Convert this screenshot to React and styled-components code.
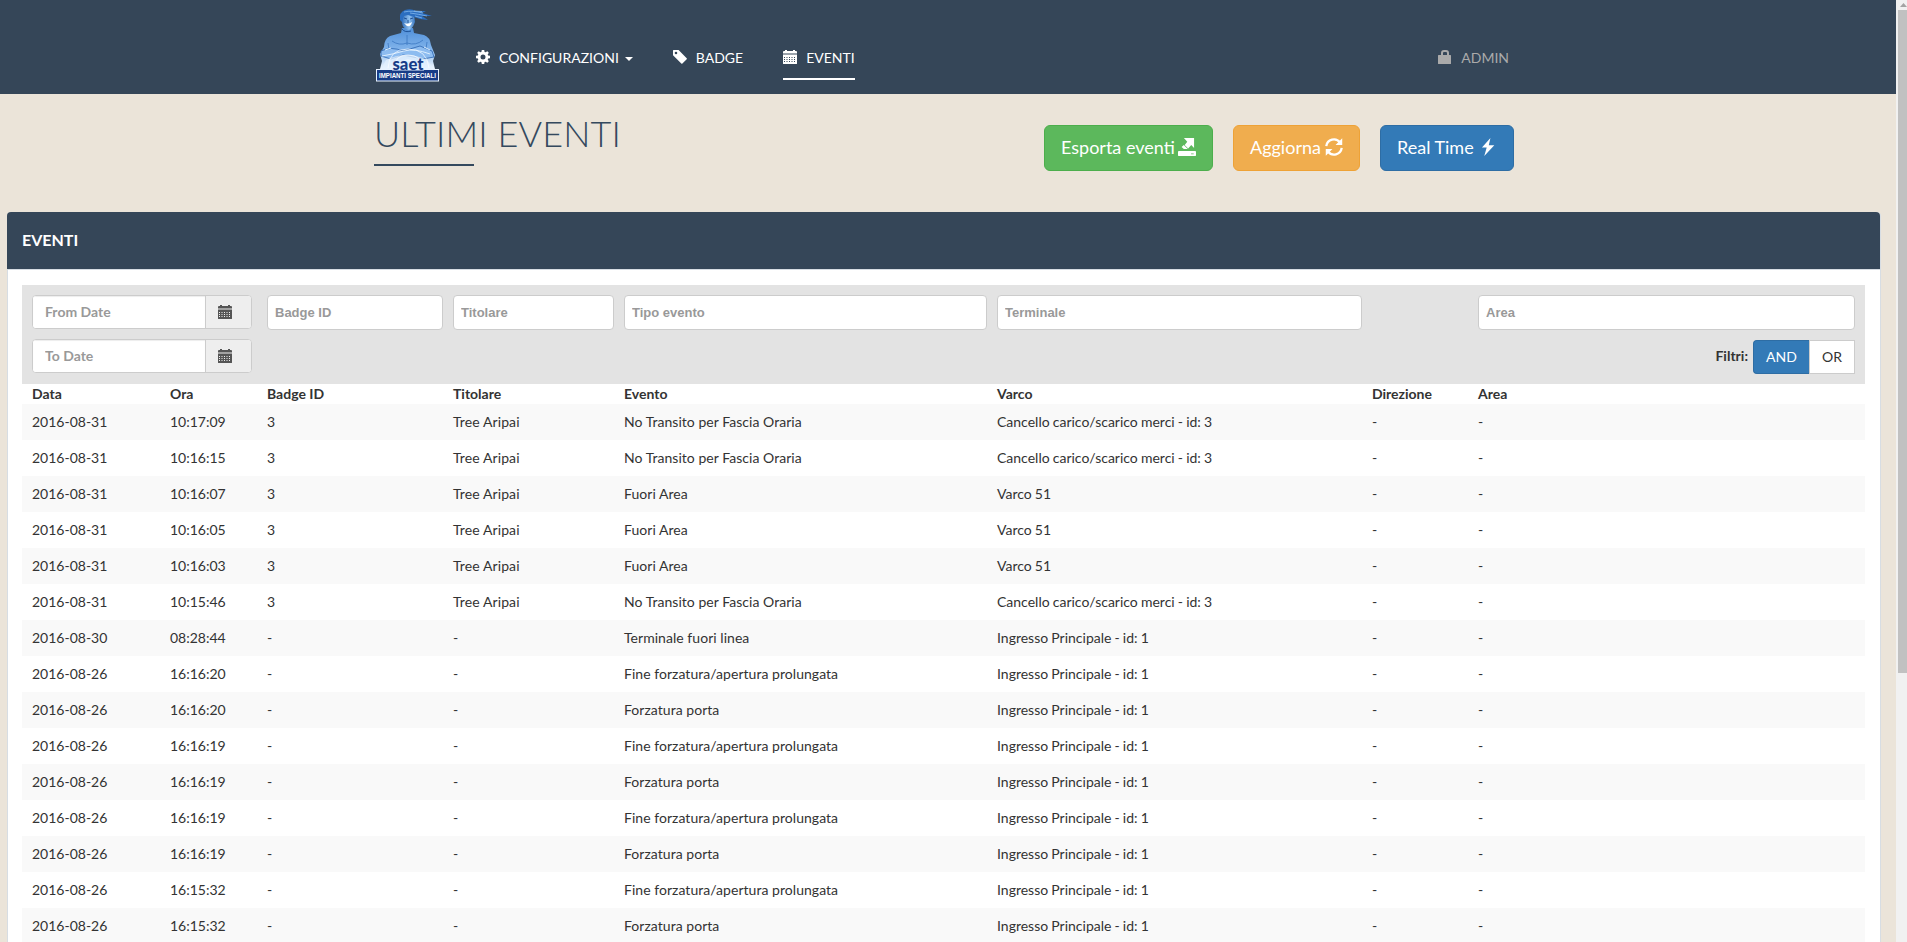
import React from 'react';
import styled, { createGlobalStyle } from 'styled-components';

const GlobalStyle = createGlobalStyle`
  *, *::before, *::after { box-sizing: border-box; }
  html, body { margin: 0; height: 100%; overflow: hidden; }
  body {
    background: #ebe4d9;
    font-family: Lato, "Liberation Sans", sans-serif;
    font-size: 14px;
    line-height: 20px;
    color: #333;
  }
  svg { display: block; flex: none; overflow: visible; }
`;

const Shell = styled.div`
  display: flex;
  height: 942px;
  overflow: hidden;
`;

const Page = styled.div`
  flex: 1;
  min-width: 0;
`;

const Scrollbar = styled.div`
  width: 11px;
  padding: 3px 0 0 2px;
  background: #f1f1f1;
`;

const ScrollArrow = styled.svg`
  margin-left: 2px;
`;

const ScrollThumb = styled.div`
  height: 663px;
  margin-top: 3px;
  background: #c1c1c1;
`;

const NavBar = styled.header`
  height: 94px;
  background: #354658;
`;

const Container = styled.div`
  display: flex;
  width: 1140px;
  margin-left: 374px;
`;

const LogoBox = styled.a`
  width: 66px;
  padding-top: 8px;
  margin-right: 36px;
`;

const NavList = styled.nav`
  display: flex;
  flex: 1;
  padding-top: 48px;
`;

const NavItem = styled.a`
  display: flex;
  align-items: flex-start;
  height: 32px;
  margin-right: ${(p) => p.$gap || 0}px;
  margin-left: ${(p) => (p.$end ? 'auto' : 0)};
  color: ${(p) => (p.$muted ? '#aaa' : '#fff')};
  border-bottom: 2px solid ${(p) => (p.$active ? '#fff' : 'transparent')};
  white-space: nowrap;
  svg { margin-top: 2px; }
  span { margin-left: 9px; }
`;

const Caret = styled.i`
  margin: 9px 0 0 6px;
  border: 4px solid transparent;
  border-top-color: #fff;
  border-bottom: 0;
`;

const TitleRow = styled(Container)`
  height: 118px;
  justify-content: space-between;
  align-items: flex-start;
`;

const Title = styled.h1`
  margin: 19px 0 0;
  color: #34495e;
  font-size: 36px;
  font-weight: 300;
  letter-spacing: 0.1px;
  line-height: 40px;
  &::after {
    content: "";
    display: block;
    width: 100px;
    height: 2px;
    margin-top: 11px;
    background: #34495e;
  }
`;

const Actions = styled.div`
  display: flex;
  gap: 20px;
  margin-top: 31px;
`;

const tones = {
  green: ['#5cb85c', '#4cae4c'],
  orange: ['#f0ad4e', '#eea236'],
  blue: ['#337ab7', '#2e6da4'],
};

const ActionButton = styled.button`
  display: flex;
  align-items: center;
  gap: ${(p) => p.$gap}px;
  width: ${(p) => p.$width}px;
  height: 46px;
  padding: 0 0 2px 16px;
  border: 1px solid ${(p) => tones[p.$tone][1]};
  border-radius: 6px;
  background: ${(p) => tones[p.$tone][0]};
  color: #fff;
  font: 18px/24px Lato, "Liberation Sans", sans-serif;
  white-space: nowrap;
`;

const Panel = styled.section`
  width: 1874px;
  height: 760px;
  margin-left: 7px;
  border: 1px solid #d7dde3;
  border-top: 0;
  border-radius: 4px 4px 0 0;
  background: #fff;
`;

const PanelHeading = styled.h2`
  height: 57px;
  margin: 0 0 0 -1px;
  padding: 18px 15px;
  border-radius: 4px 4px 0 0;
  background: #354658;
  color: #fff;
  font-size: 16px;
  font-weight: 700;
  line-height: 20px;
`;

const PanelBody = styled.div`
  padding: 15px 15px 15px 14px;
  border-top: 1px solid #d7dde3;
`;

const columns = '138px 97px 186px 171px 373px 375px 106px 397px';

const Filters = styled.div`
  display: grid;
  grid-template-columns: 235px 186px 171px 373px 375px 106px 397px;
  height: 99px;
  padding-top: 10px;
  background: #e3e3e3;
`;

const FilterCell = styled.div`
  display: flex;
  flex-direction: column;
  gap: 10px;
  padding-left: 10px;
  padding-right: ${(p) => p.$right || 0}px;
`;

const DateField = styled.div`
  display: flex;
  width: 220px;
  height: 34px;
  border: 1px solid #ccc;
  border-radius: 4px;
  background: #fff;
  overflow: hidden;
`;

const DateInput = styled.input`
  width: 172px;
  padding: 0 12px;
  border: 0;
  outline: 0;
  box-shadow: inset 0 1px 1px rgba(0, 0, 0, 0.075);
  font: 700 14px/20px Lato, "Liberation Sans", sans-serif;
  &::placeholder { color: #999; opacity: 1; }
`;

const DateAddon = styled.div`
  flex: 1;
  padding: 9px 0 0 12px;
  border-left: 1px solid #ccc;
  background: #eee;
  color: #555;
`;

const TextInput = styled.input`
  width: 100%;
  height: 35px;
  padding: 0 7px;
  border: 1px solid #ccc;
  border-radius: 4px;
  background: #fff;
  font: 700 13px/20px "Liberation Sans", Arial, sans-serif;
  &::placeholder { color: #999; opacity: 1; }
`;

const Toggle = styled.div`
  display: flex;
  justify-content: flex-end;
`;

const ToggleLabel = styled.b`
  margin: 6px 5px 0 0;
`;

const ToggleButton = styled.button`
  width: ${(p) => (p.$on ? 56 : 46)}px;
  height: 34px;
  padding: 0;
  border: 1px solid ${(p) => (p.$on ? '#2e6da4' : '#ccc')};
  border-right-width: ${(p) => (p.$on ? 0 : 1)}px;
  border-radius: ${(p) => (p.$on ? '4px 0 0 4px' : '0')};
  background: ${(p) => (p.$on ? '#337ab7' : '#fff')};
  color: ${(p) => (p.$on ? '#fff' : '#333')};
  font: 14px/20px Lato, "Liberation Sans", sans-serif;
`;

const HeaderRow = styled.div`
  display: grid;
  grid-template-columns: ${columns};
  height: 20px;
  font-weight: 700;
`;

const Cell = styled.span`
  padding-left: 10px;
  white-space: nowrap;
`;

const Row = styled.div`
  display: grid;
  grid-template-columns: ${columns};
  height: 36px;
  padding-top: 8px;
  &:nth-child(odd) { background: #f9f9f9; }
  ${Cell}:nth-child(4) { letter-spacing: 0.1px; }
  ${Cell}:nth-child(5) { letter-spacing: 0.04px; }
  ${Cell}:nth-child(6) { word-spacing: -0.45px; }
`;

const Icon = ({ size = 14, children }) => (
  <svg width={size} height={size} viewBox="0 0 14 14" fill="currentColor">{children}</svg>
);

const CogIcon = () => (
  <Icon>
    <path fillRule="evenodd" d="M5.800 0h2.400l.4 1.900 1 .4L11.300 1.200 12.800 2.700 11.700 4.400l.4 1L14 5.800v2.400l-1.900.4-.4 1 1.100 1.700-1.500 1.500-1.700-1.100-1 .4L8.200 14H5.800l-.4-1.900-1-.4-1.700 1.100-1.500-1.500L2.300 9.600l-.4-1L0 8.200V5.800l1.900-.4.4-1L1.200 2.700l1.500-1.500L4.400 2.300l1-.4zM7 4.500A2.500 2.500 0 1 0 7 9.500 2.500 2.500 0 1 0 7 4.500z" />
  </Icon>
);

const TagIcon = () => (
  <Icon>
    <path fillRule="evenodd" d="M.6 0H5.600L13.700 8.200a.8.800 0 0 1 0 1.100L9.400 13.600a.8.800 0 0 1-1.100 0L0 5.300V.6A.6.6 0 0 1 .6 0zM3 1.700a1.300 1.300 0 1 0 0 2.600 1.300 1.300 0 1 0 0-2.600z" />
  </Icon>
);

const CalendarIcon = () => (
  <Icon>
    <path d="M2 0h2v1h6V0h2v1h1a1 1 0 0 1 1 1v1H0V2a1 1 0 0 1 1-1h1z" />
    <path opacity=".5" d="M0 3h14v2H0z" />
    <path fillRule="evenodd" d="M0 5h14v8.400a.6.600 0 0 1-.6.600H.6a.6.600 0 0 1-.6-.6zM1 7v1h1V7zM3.500 7v1h1V7zM6 7v1h1V7zM8.500 7v1h1V7zM11 7v1h1V7zM1 9v1h1V9zM3.500 9v1h1V9zM6 9v1h1V9zM8.500 9v1h1V9zM11 9v1h1V9zM1 11v1h1v-1zM3.500 11v1h1v-1zM6 11v1h1v-1zM8.500 11v1h1v-1zM11 11v1h1v-1z" />
  </Icon>
);

const LockIcon = () => (
  <Icon>
    <path fillRule="evenodd" d="M3 5V3a3 3 0 0 1 3-3h2a3 3 0 0 1 3 3v2h1.400a.6.600 0 0 1 .6.600v7.800a.6.600 0 0 1-.6.600H.6a.6.600 0 0 1-.6-.6V5.600A.6.600 0 0 1 .6 5zM5 5h4V3a1 1 0 0 0-1-1H6a1 1 0 0 0-1 1z" />
  </Icon>
);

const ExportIcon = () => (
  <Icon size={18}>
    <path d="M4.600 0H12.500V7.800L10.300 5.500 7.900 8.100 5.200 5.400 7.200 2.900zM4.500 5.500 7.600 8.500H4.500L2.800 7z" />
    <path fillRule="evenodd" d="M.4 10.200H13.600l.4 .4V13.600l-.4.400H.4L0 13.600v-3zM10.200 12v.7h2V12z" />
  </Icon>
);

const RefreshIcon = () => (
  <Icon size={18}>
    <path fill="none" stroke="currentColor" strokeWidth="1.800" d="M1 6.300A6 6 0 0 1 11.700 3.500M13 7.700A6 6 0 0 1 2.300 10.500" />
    <path d="M13.400 .2V5.500H8.200zM.6 13.800V8.500H5.800z" />
  </Icon>
);

const FlashIcon = () => (
  <Icon size={18}>
    <path d="M8.900 0 2.300 7.400H6L4.100 14 11.900 5.700H7.600z" />
  </Icon>
);

const Logo = () => (
  <svg width="66" height="76" viewBox="0 0 66 76">
    <defs>
      <linearGradient id="skin" x1="0" y1="0" x2="0" y2="1">
        <stop offset="0" stopColor="#4f8fd9" />
        <stop offset=".5" stopColor="#7fb2ea" />
        <stop offset="1" stopColor="#f1f8ff" />
      </linearGradient>
      <linearGradient id="face" x1="0" y1="0" x2="1" y2="0">
        <stop offset="0" stopColor="#2a68b6" />
        <stop offset=".6" stopColor="#8fc0ef" />
        <stop offset="1" stopColor="#3976bf" />
      </linearGradient>
    </defs>
    <path fill="url(#skin)" d="M28 20 27 25 16 28Q10 31 10 39L6 46 8 53 6 61H61L59 53 61 47 57 37Q56 29 50 27L40 25 39 20z" />
    <path fill="url(#face)" d="M27 6Q31 1 40 5L41 14Q38 22 34 22 28 20 28 14z" />
    <path fill="#2b6ec0" d="M26 12Q25 4 31 2 37 0 42 3L52 3 48 5 58 8 48 8 54 12 46 11 40 9 34 7 30 8 28 14z" />
    <path fill="none" stroke="#8fc2f2" strokeWidth=".7" d="M30 4Q38 2 49 5M36 5Q44 6 53 8M40 3 48 3.500M41 8 48 10" />
    <path fill="none" stroke="#17498f" strokeWidth=".9" d="M30 10l3 1M36 11l3-1M34 12v3M28 21Q31 25 37 23" />
    <path fill="none" stroke="#3b77c2" strokeWidth=".8" d="M14 35 15 42M53 34 52 41M33 27V37M18 33Q25 38 33 35 42 38 49 32" />
    <path fill="#fff" d="M30 15Q34 17 38 14 37 19 33 18z" />
    <path fill="#8dbcf0" stroke="#2b65b0" strokeWidth=".8" d="M7 43Q17 38 29 43L46 38 58 43 60 49 49 51 29 47 17 51 7 48z" />
    <path fill="none" stroke="#dceeff" strokeWidth="1" d="M8 48Q20 46 30 43T56 46M11 42 17 40M50 39 56 42" />
    <path fill="#e4f1ff" opacity=".75" d="M12 52Q32 42 53 52L60 61H7z" />
    <path fill="none" stroke="#fff" opacity=".8" strokeWidth=".8" d="M21 60Q20 47 34 47T48 60M14 60Q15 41 34 41T55 60M27 60Q27 52 34 52T42 60" />
    <rect x="2.500" y="61.500" width="62" height="11.500" fill="#173c87" stroke="#e9f3ff" />
    <path stroke="#e9f3ff" strokeWidth="2" d="M18 61.500H50" />
    <text x="18.500" y="61.500" fill="#173c87" fontFamily="Lato, sans-serif" fontSize="17" fontWeight="900" textLength="31" lengthAdjust="spacingAndGlyphs">saet</text>
    <text x="5" y="70.300" fill="#fff" fontFamily="Liberation Sans, sans-serif" fontSize="7.500" fontWeight="700" textLength="57" lengthAdjust="spacingAndGlyphs">IMPIANTI SPECIALI</text>
  </svg>
);

const cancello = 'Cancello carico/scarico merci - id: 3';
const ingresso = 'Ingresso Principale - id: 1';
const fascia = 'No Transito per Fascia Oraria';
const fine = 'Fine forzatura/apertura prolungata';

const badgeEvent = (time, event, gate) => ['2016-08-31', time, '3', 'Tree Aripai', event, gate, '-', '-'];
const doorEvent = (date, time, event) => [date, time, '-', '-', event, ingresso, '-', '-'];

const events = [
  badgeEvent('10:17:09', fascia, cancello),
  badgeEvent('10:16:15', fascia, cancello),
  badgeEvent('10:16:07', 'Fuori Area', 'Varco 51'),
  badgeEvent('10:16:05', 'Fuori Area', 'Varco 51'),
  badgeEvent('10:16:03', 'Fuori Area', 'Varco 51'),
  badgeEvent('10:15:46', fascia, cancello),
  doorEvent('2016-08-30', '08:28:44', 'Terminale fuori linea'),
  doorEvent('2016-08-26', '16:16:20', fine),
  doorEvent('2016-08-26', '16:16:20', 'Forzatura porta'),
  doorEvent('2016-08-26', '16:16:19', fine),
  doorEvent('2016-08-26', '16:16:19', 'Forzatura porta'),
  doorEvent('2016-08-26', '16:16:19', fine),
  doorEvent('2016-08-26', '16:16:19', 'Forzatura porta'),
  doorEvent('2016-08-26', '16:15:32', fine),
  doorEvent('2016-08-26', '16:15:32', 'Forzatura porta'),
];

const headers = ['Data', 'Ora', 'Badge ID', 'Titolare', 'Evento', 'Varco', 'Direzione', 'Area'];

const DatePicker = ({ placeholder }) => (
  <DateField>
    <DateInput placeholder={placeholder} />
    <DateAddon><CalendarIcon /></DateAddon>
  </DateField>
);

export default function App() {
  return (
    <Shell>
      <GlobalStyle />
      <Page>
        <NavBar>
          <Container>
            <LogoBox><Logo /></LogoBox>
            <NavList>
              <NavItem $gap={40}><CogIcon /><span>CONFIGURAZIONI</span><Caret /></NavItem>
              <NavItem $gap={40}><TagIcon /><span>BADGE</span></NavItem>
              <NavItem $active><CalendarIcon /><span>EVENTI</span></NavItem>
              <NavItem $muted $end $gap={5}><LockIcon /><span>ADMIN</span></NavItem>
            </NavList>
          </Container>
        </NavBar>
        <TitleRow>
          <Title>ULTIMI EVENTI</Title>
          <Actions>
            <ActionButton $tone="green" $width={169} $gap={3}>Esporta eventi <ExportIcon /></ActionButton>
            <ActionButton $tone="orange" $width={127} $gap={4}>Aggiorna <RefreshIcon /></ActionButton>
            <ActionButton $tone="blue" $width={134} $gap={5}>Real Time <FlashIcon /></ActionButton>
          </Actions>
        </TitleRow>
        <Panel>
          <PanelHeading>EVENTI</PanelHeading>
          <PanelBody>
            <Filters>
              <FilterCell>
                <DatePicker placeholder="From Date" />
                <DatePicker placeholder="To Date" />
              </FilterCell>
              <FilterCell><TextInput placeholder="Badge ID" /></FilterCell>
              <FilterCell><TextInput placeholder="Titolare" /></FilterCell>
              <FilterCell><TextInput placeholder="Tipo evento" /></FilterCell>
              <FilterCell><TextInput placeholder="Terminale" /></FilterCell>
              <FilterCell />
              <FilterCell $right={10}>
                <TextInput placeholder="Area" />
                <Toggle>
                  <ToggleLabel>Filtri:</ToggleLabel>
                  <ToggleButton $on>AND</ToggleButton>
                  <ToggleButton>OR</ToggleButton>
                </Toggle>
              </FilterCell>
            </Filters>
            <HeaderRow>{headers.map((h) => <Cell key={h}>{h}</Cell>)}</HeaderRow>
            <div>
              {events.map((row, i) => (
                <Row key={i}>{row.map((value, j) => <Cell key={j}>{value}</Cell>)}</Row>
              ))}
            </div>
          </PanelBody>
        </Panel>
      </Page>
      <Scrollbar>
        <ScrollArrow width="7" height="4" viewBox="0 0 7 4"><path fill="#a3a3a3" d="M3.500 0 7 4H0z" /></ScrollArrow>
        <ScrollThumb />
      </Scrollbar>
    </Shell>
  );
}
